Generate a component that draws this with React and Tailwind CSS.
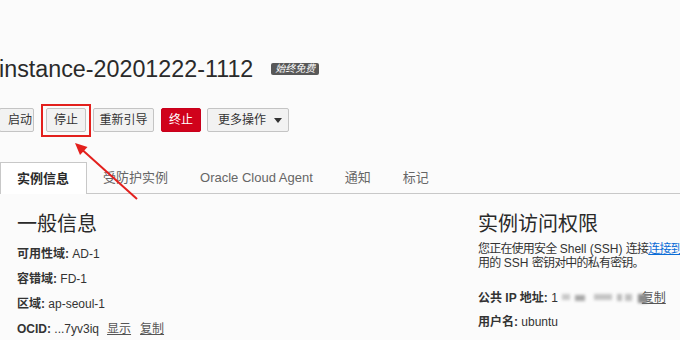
import React from "react";

function Btn({ className = "", children }) {
  return (
    <button
      className={
        "h-[24px] flex items-center justify-center rounded-[2px] border border-[#c4c4c4] bg-[#f2f2f2] text-[#333] text-[12px] leading-none whitespace-nowrap " +
        className
      }
    >
      {children}
    </button>
  );
}

export default function App() {
  return (
    <div className="relative w-[680px] h-[340px] overflow-hidden bg-[#fbfbfb] text-[#333] pt-[55px] font-['Liberation_Sans','Noto_Sans_CJK_SC',sans-serif]">
      {/* Title */}
      <div className="flex items-center h-[28px] ml-[-1px]">
        <h1 className="text-[23.3px] leading-[28px] font-normal text-[#2a2a2a] whitespace-nowrap">
          instance-20201222-1112
        </h1>
        <span className="ml-[18px] h-[12px] w-[48px] flex items-center justify-center rounded-[2px] bg-[#585858] text-white text-[10px] italic leading-none">
          始终免费
        </span>
      </div>

      {/* Buttons */}
      <div className="flex items-center mt-[25px] h-[24px]">
        <Btn className="ml-[-1px] w-[35px] !justify-start pl-[8px]">启动</Btn>
        <span className="relative ml-[12px] flex">
          <Btn className="w-[40px]">停止</Btn>
          <span className="absolute left-[-5px] top-[-4px] w-[50px] h-[33px] border-2 border-[#e3201d]" />
        </span>
        <Btn className="ml-[7px] w-[61px]">重新引导</Btn>
        <button className="ml-[7px] w-[40px] h-[24px] flex items-center justify-center rounded-[2px] border border-[#c8001c] bg-[#d0021b] text-white text-[12px] leading-none">
          终止
        </button>
        <Btn className="ml-[6px] w-[82px] !justify-start pl-[10px]">
          <span>更多操作</span>
          <svg className="ml-[8px]" width="8" height="5" viewBox="0 0 8 5">
            <path d="M0 0 L8 0 L4 5 Z" fill="#333" />
          </svg>
        </Btn>
      </div>

      {/* Tabs */}
      <div className="mt-[30px] flex h-[32px] border-b border-[#c8c8c8] text-[13px] leading-none whitespace-nowrap">
        <div className="h-[32px] -mb-px flex items-center pl-[16px] pr-[17px] border-t border-l border-r border-[#c8c8c8] bg-white font-bold text-[#2a2a2a]">
          实例信息
        </div>
        <div className="flex items-center px-[16px] text-[#666]">受防护实例</div>
        <div className="flex items-center px-[16px] text-[#666]">Oracle Cloud Agent</div>
        <div className="flex items-center px-[16px] text-[#666]">通知</div>
        <div className="flex items-center px-[16px] text-[#666]">标记</div>
      </div>

      {/* Content */}
      <div className="flex pt-[18px] text-[12px]">
        <div className="w-[478px] shrink-0 pl-[17px]">
          <h2 className="text-[20px] leading-[24px] font-normal text-[#2a2a2a]">一般信息</h2>
          <div className="mt-[5px]">
            <div className="h-[25px] flex items-center whitespace-nowrap">
              <b>可用性域:</b>&nbsp;AD-1
            </div>
            <div className="h-[25px] flex items-center whitespace-nowrap">
              <b>容错域:</b>&nbsp;FD-1
            </div>
            <div className="h-[25px] flex items-center whitespace-nowrap">
              <b>区域:</b>&nbsp;ap-seoul-1
            </div>
            <div className="h-[25px] flex items-center whitespace-nowrap">
              <b>OCID:</b>&nbsp;...7yv3iq
              <span className="ml-[8px] underline text-[#555]">显示</span>
              <span className="ml-[9px] underline text-[#555]">复制</span>
            </div>
          </div>
        </div>

        <div className="flex-1 min-w-0">
          <h2 className="text-[20px] leading-[24px] font-normal text-[#2a2a2a] whitespace-nowrap">实例访问权限</h2>
          <p className="mt-[6px] leading-[14px] whitespace-nowrap">
            <span className="tracking-[-0.8px]">您正在使用安全</span> Shell (SSH){" "}
            <span className="tracking-[-0.8px]">连接</span>
            <span className="text-[#0a6cd6] underline tracking-[-0.8px]">连接到正在运行的实例</span>
            <span className="tracking-[-0.8px]">。连接时需要使用创建实例时所</span>
            <br />
            <span className="tracking-[-0.8px]">用的</span> SSH{" "}
            <span className="tracking-[-0.8px]">密钥对中的私有密钥。</span>
          </p>
          <div className="mt-[16px]">
            <div className="h-[24px] flex items-center whitespace-nowrap">
              <b>公共 IP 地址:</b>&nbsp;1
              <span className="relative inline-flex items-center h-[10px] w-[86px] ml-[2px]">
                <span className="absolute left-[2px] top-[1px] w-[8px] h-[6px] bg-[#c8c8c8] blur-[1.5px]" />
                <span className="absolute left-[15px] top-[2px] w-[10px] h-[6px] bg-[#a8a8a8] blur-[1.5px]" />
                <span className="absolute left-[34px] top-[1px] w-[18px] h-[6px] bg-[#c4c4c4] blur-[1.5px]" />
                <span className="absolute left-[57px] top-[1px] w-[5px] h-[7px] bg-[#bbbbbb] blur-[1.5px]" />
                <span className="absolute left-[65px] top-[1px] w-[7px] h-[7px] bg-[#c0c0c0] blur-[1.5px]" />
                <span className="absolute left-[78px] top-[1px] w-[9px] h-[9px] bg-[#8a8a8a] blur-[1.5px]" />
              </span>
              <span className="underline text-[#555] ml-[-4px]">复制</span>
            </div>
            <div className="h-[24px] flex items-center whitespace-nowrap">
              <b>用户名:</b>&nbsp;ubuntu
            </div>
          </div>
        </div>
      </div>

      {/* Annotation arrow */}
      <svg className="absolute left-0 top-0 pointer-events-none" width="680" height="340">
        <line x1="137" y1="199" x2="83" y2="150.5" stroke="#e3201d" strokeWidth="2" />
        <polygon points="75,143 87.5,147 80,155" fill="#e3201d" />
      </svg>
    </div>
  );
}
